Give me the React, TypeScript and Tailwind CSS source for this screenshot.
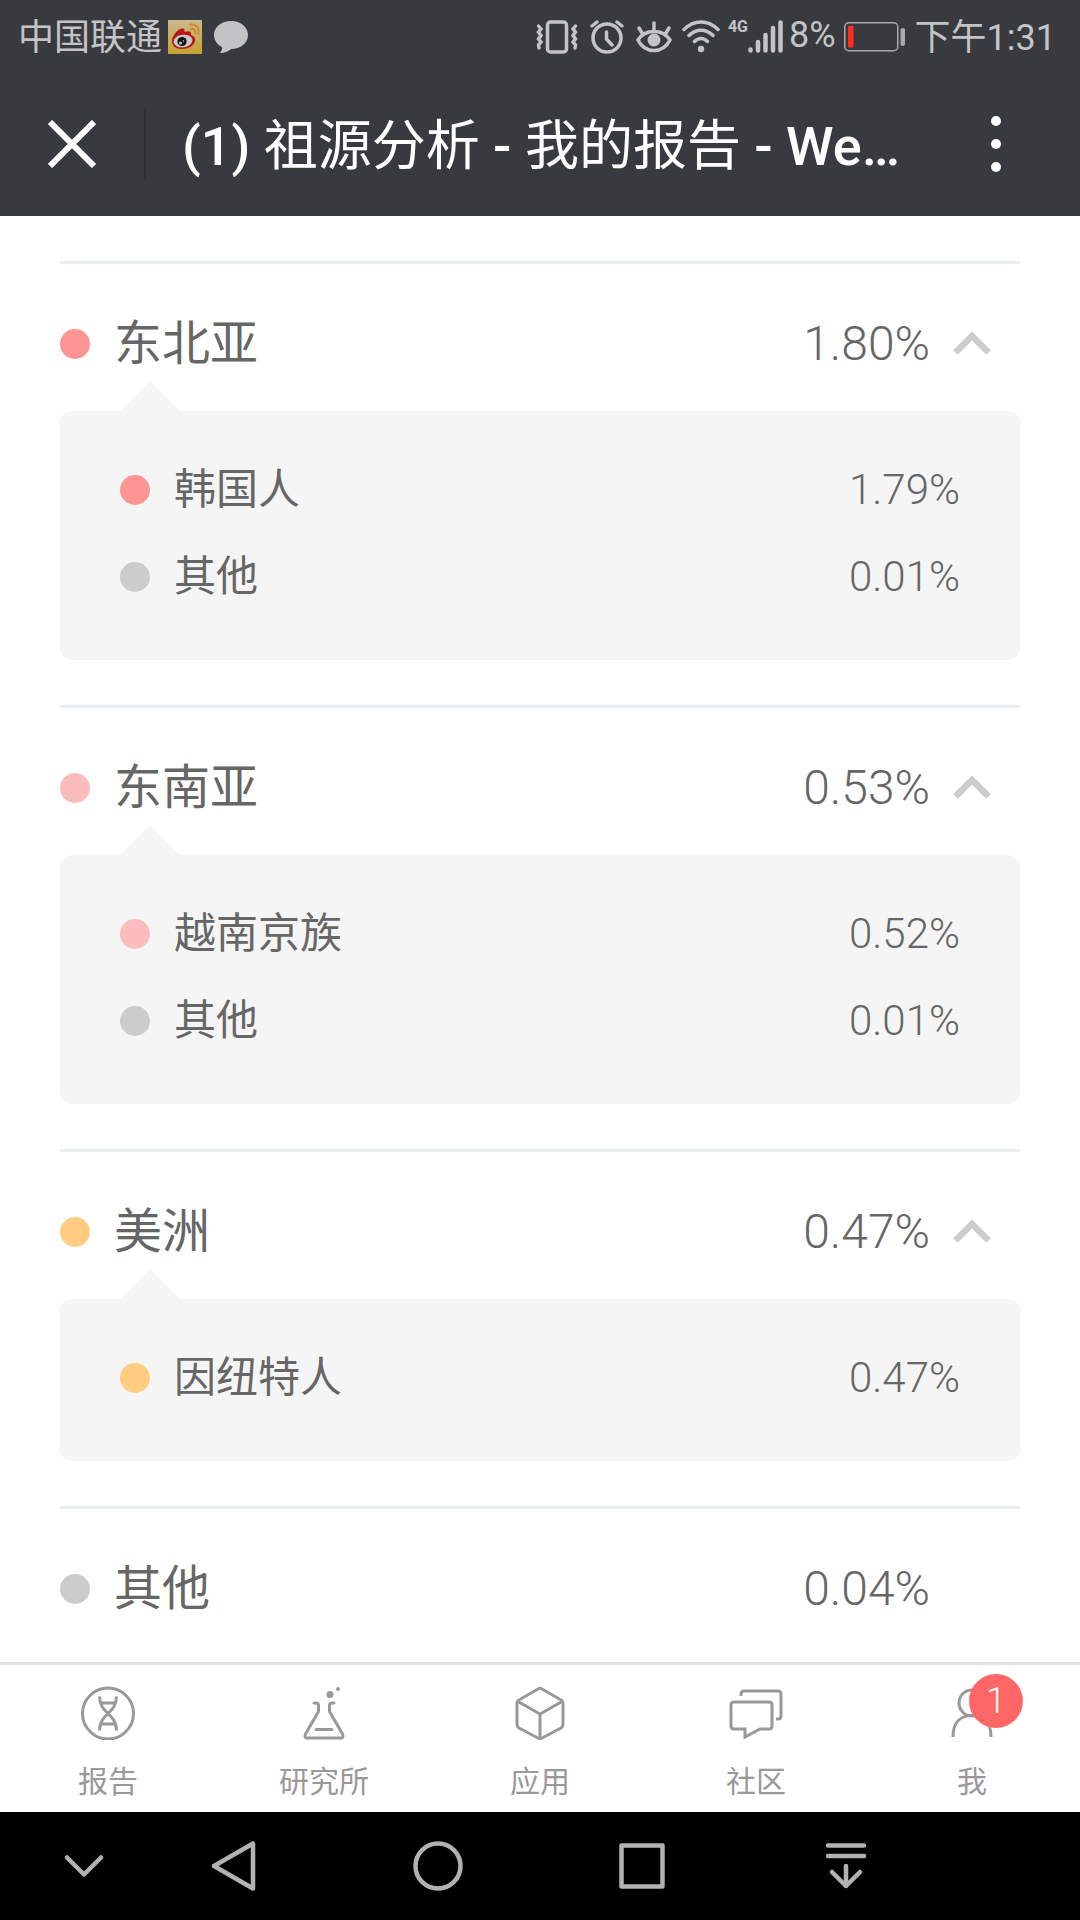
import React, { useState } from 'react';

interface Item {
    name: string;
    value: string;
    dot: string;
}

interface Region extends Item {
    children: Item[];
}

const REGIONS: Region[] = [
    {
        name: '东北亚', value: '1.80%', dot: 'bg-[#ff9494]',
        children: [
            { name: '韩国人', value: '1.79%', dot: 'bg-[#ff9494]' },
            { name: '其他', value: '0.01%', dot: 'bg-[#cccccc]' },
        ],
    },
    {
        name: '东南亚', value: '0.53%', dot: 'bg-[#fabcbc]',
        children: [
            { name: '越南京族', value: '0.52%', dot: 'bg-[#fabcbc]' },
            { name: '其他', value: '0.01%', dot: 'bg-[#cccccc]' },
        ],
    },
    {
        name: '美洲', value: '0.47%', dot: 'bg-[#ffcc80]',
        children: [
            { name: '因纽特人', value: '0.47%', dot: 'bg-[#ffcc80]' },
        ],
    },
    { name: '其他', value: '0.04%', dot: 'bg-[#cccccc]', children: [] },
];

const WeiboIcon = () => (
    <svg width="34" height="34" viewBox="0 0 34 34">
        <defs>
            <linearGradient id="weibo-bg" x1="0" y1="0" x2="0" y2="1">
                <stop offset="0" stopColor="#c9b98c" />
                <stop offset="1" stopColor="#c7a22f" />
            </linearGradient>
        </defs>
        <rect width="34" height="34" fill="url(#weibo-bg)" />
        <path d="M4 21C4 15 11 7.500 15 8.500C17 9 16.500 11 16.500 12C20 10.500 24 11 23 15C26 16 28 18 27 21C26 26 20 29 14 29C8 29 4 26 4 21Z" fill="#b8161b" />
        <ellipse cx="15" cy="21" rx="9.500" ry="6.300" fill="#c8c8c8" transform="rotate(-6 15 21)" />
        <circle cx="14" cy="21.500" r="4.600" fill="#111" />
        <circle cx="12.500" cy="23" r="1.500" fill="#c8c8c8" />
        <circle cx="15.400" cy="21" r="0.800" fill="#c8c8c8" />
        <path d="M22.500 4.600C28 3.500 32 8.500 30.300 14M23 9C26 8.300 28 10.500 27 13.500" fill="none" stroke="#d08a2a" strokeWidth="2" strokeLinecap="round" />
    </svg>
);

const BubbleIcon = () => (
    <svg width="34" height="34" viewBox="0 0 34 34" fill="#c4c4c6">
        <path d="M17 1C26.500 1 34 7 34 15C34 23 26.500 29 17 29C15.500 30.500 11 33 6.500 33C6 33 6 32.300 6.500 32C8 30.500 8.500 28.500 8 27C3 24.500 0 20 0 15C0 7 7.500 1 17 1Z" />
    </svg>
);

const VibrateIcon = () => (
    <svg width="42" height="34" viewBox="0 0 42 34" fill="none" stroke="#c4c4c6" strokeWidth="3.500" strokeLinecap="round">
        <rect x="11.500" y="2" width="19" height="30" rx="3" />
        <path d="M2.500 6L5 9L2.500 12L5 15.500L2.500 19L5 22L2.500 25L3 28M39.500 6L37 9L39.500 12L37 15.500L39.500 19L37 22L39.500 25L39 28" />
    </svg>
);

const AlarmIcon = () => (
    <svg width="34" height="34" viewBox="0 0 34 34" fill="none" stroke="#c4c4c6" strokeWidth="3.500" strokeLinecap="round">
        <circle cx="17" cy="18" r="14" />
        <path d="M16.500 12V19L22 25M2 6L7 2M32 6L27 2" />
    </svg>
);

const EyeIcon = () => (
    <svg width="36" height="34" viewBox="0 0 36 34" fill="none" stroke="#c4c4c6" strokeWidth="3.500" strokeLinecap="round">
        <path d="M2 20C9 8.500 27 8.500 34 20C27 34 9 34 2 20ZM18 10V3M6 13L3 8M30 13L33 8" />
        <circle cx="18" cy="20" r="6.500" fill="#c4c4c6" stroke="none" />
    </svg>
);

const WifiIcon = () => (
    <svg width="38" height="34" viewBox="0 0 38 34" fill="none" stroke="#c4c4c6" strokeWidth="3.500" strokeLinecap="round">
        <path d="M2 9.500C12 -0.500 26 -0.500 36 9.500M7 15.500C14 8.500 24 8.500 31 15.500M12.500 21.500C16.500 17.500 21.500 17.500 25.500 21.500" />
        <circle cx="19" cy="29" r="3.200" fill="#c4c4c6" stroke="none" />
    </svg>
);

const SignalIcon = () => (
    <svg width="35" height="34" viewBox="0 0 35 34" stroke="#c4c4c6" strokeWidth="4.500" strokeLinecap="round">
        <path d="M2.500 29.500V30.500M10 22V30.500M17.500 15V30.500M25 8V30.500M32.500 2.500V30.500" />
    </svg>
);

const BatteryIcon = () => (
    <svg width="61" height="30" viewBox="0 0 61 30">
        <rect x="0.750" y="0.750" width="53" height="28" rx="4" fill="none" stroke="#a9a9ab" strokeWidth="1.500" />
        <rect x="4" y="4" width="5.500" height="21.500" rx="1" fill="#ff2d1c" />
        <rect x="56.500" y="6" width="4.500" height="18" rx="2" fill="#a9a9ab" />
    </svg>
);

const ChevronUp = () => (
    <svg width="38" height="24" viewBox="0 0 38 24" fill="none" stroke="#cccccc" strokeWidth="6.500">
        <path d="M2.500 20.500L19 4L35.500 20.500" />
    </svg>
);

const StatusBar = () => (
    <div className="flex h-[72px] items-center justify-between pt-0.5 pr-6 pl-[18px] text-4xl/9 text-[#c4c4c6]">
        <div className="flex items-center">
            <span className="pt-0.5">中国联通</span>
            <span className="mr-3 ml-1.5"><WeiboIcon /></span>
            <BubbleIcon />
        </div>
        <div className="flex items-center">
            <VibrateIcon />
            <span className="ml-3"><AlarmIcon /></span>
            <span className="ml-3"><EyeIcon /></span>
            <span className="ml-2.5"><WifiIcon /></span>
            <span className="ml-2 self-start text-base/5 font-bold">4G</span>
            <SignalIcon />
            <span className="ml-1.5 pb-1">8%</span>
            <span className="mr-2.5 ml-2"><BatteryIcon /></span>
            <span className="pt-0.5">下午1:31</span>
        </div>
    </div>
);

const TitleBar = () => (
    <div className="flex h-36 items-center">
        <button aria-label="关闭" className="flex h-[72px] w-[146px] shrink-0 items-center justify-center border-r-2 border-[#2e2e32]">
            <svg width="48" height="48" viewBox="0 0 48 48" stroke="#ffffff" strokeWidth="6">
                <path d="M2 2L46 46M46 2L2 46" />
            </svg>
        </button>
        <h1 className="min-w-0 flex-1 truncate pt-1.5 pl-9 text-[54px]/[72px] font-medium text-white">
            (1) <span className="font-normal">祖源分析</span> - <span className="font-normal">我的报告</span> - We…
        </h1>
        <button aria-label="更多" className="flex h-[72px] w-[168px] shrink-0 items-center justify-center">
            <svg width="10" height="58" viewBox="0 0 10 58" fill="#ffffff">
                <circle cx="5" cy="6" r="5" />
                <circle cx="5" cy="29" r="5" />
                <circle cx="5" cy="52" r="5" />
            </svg>
        </button>
    </div>
);

const RegionSection = ({ region }: { region: Region }) => {
    const [open, setOpen] = useState(true);
    const expandable = region.children.length > 0;

    return (
        <section className="mx-[60px] border-t-3 border-[#ebeef1] pb-[45px]">
            <button
                onClick={() => setOpen(!open)}
                aria-expanded={expandable ? open : undefined}
                className="flex h-[147px] w-full items-center pt-3 pr-[29px] text-left text-5xl/[72px] text-[#666666]"
            >
                <span className={`mr-6 size-[30px] rounded-full ${region.dot}`}></span>
                <span className="flex-1">{region.name}</span>
                <span className="font-light">{region.value}</span>
                <span className="ml-[23px] flex w-[38px]">{expandable && <ChevronUp />}</span>
            </button>

            {expandable && open && (
                <div className="relative rounded-xl bg-[#f5f5f5] px-[60px] pt-[35px] pb-10">
                    {/* pointer towards the region name */}
                    <svg className="absolute bottom-full left-[60px]" width="60" height="30" viewBox="0 0 60 30" fill="#f5f5f5">
                        <path d="M0 30L30 0L60 30Z" />
                    </svg>
                    <ul>
                        {region.children.map((item) => (
                            <li key={item.name} className="flex h-[87px] items-center text-[42px]/[60px] text-[#666666]">
                                <span className={`mr-6 size-[30px] rounded-full ${item.dot}`}></span>
                                <span className="flex-1">{item.name}</span>
                                <span className="font-light">{item.value}</span>
                            </li>
                        ))}
                    </ul>
                </div>
            )}
        </section>
    );
};

const TabIcon = ({ children }: { children: React.ReactNode }) => (
    <svg width="54" height="54" viewBox="0 0 54 54" fill="none" stroke="#999999" strokeWidth="3">
        {children}
    </svg>
);

const TABS = [
    {
        label: '报告',
        badge: 0,
        icon: (
            <TabIcon>
                <circle cx="27" cy="27.500" r="25.500" />
                <path d="M18.500 10.500C18.500 28 35.500 27 35.500 44.500M35.500 10.500C35.500 28 18.500 27 18.500 44.500M20 17H34M20 38H34" />
            </TabIcon>
        ),
    },
    {
        label: '研究所',
        badge: 0,
        icon: (
            <TabIcon>
                <path d="M17 17H19Q21.500 17 21.500 19.500V25.500L8.500 48Q7 52 10 52H44Q47 52 45.500 48L32.500 25.500V19.500Q32.500 17 35 17H37M19 43.500H35" strokeLinecap="round" />
                <circle cx="33" cy="8.500" r="3.500" fill="#999999" stroke="none" />
                <circle cx="41" cy="3" r="2" fill="#999999" stroke="none" />
            </TabIcon>
        ),
    },
    {
        label: '应用',
        badge: 0,
        icon: (
            <TabIcon>
                <path d="M25 3Q27 1.500 29 3L48 14Q50 15 50 17.500V38.500Q50 40.500 48 42L29 52Q27 53 25 52L6 42Q4 40.500 4 38.500V17.500Q4 15 6 14ZM5 15.500L27 28L49 15.500M27 28V52" />
            </TabIcon>
        ),
    },
    {
        label: '社区',
        badge: 0,
        icon: (
            <TabIcon>
                <path d="M5 16H40Q43 16 43 19V40Q43 43 40 43H31L16 51V43H5Q2 43 2 40V19Q2 16 5 16Z" />
                <path d="M12 10V8Q12 5 15 5H49Q52 5 52 8V30Q52 33 49 33H47" />
            </TabIcon>
        ),
    },
    {
        label: '我',
        badge: 1,
        icon: (
            <TabIcon>
                <circle cx="27" cy="17" r="13" />
                <path d="M8 51C8 36 16 29.500 27 29.500S46 36 46 51" />
            </TabIcon>
        ),
    },
];

const TabBar = () => (
    <nav className="grid grid-cols-5 border-t-3 border-[#dfe3e6] bg-white">
        {TABS.map((tab) => (
            <a key={tab.label} href="#" className="flex h-[147px] flex-col items-center pt-[21px] text-3xl/9 text-[#999999]">
                <span className="relative mb-6">
                    {tab.icon}
                    {tab.badge > 0 && (
                        <span className="absolute -top-3 left-6 flex size-[54px] items-center justify-center rounded-full bg-[#ff6666] text-4xl/9 font-light text-white">
                            {tab.badge}
                        </span>
                    )}
                </span>
                {tab.label}
            </a>
        ))}
    </nav>
);

const NavIcon = ({ label, d }: { label: string, d: string }) => (
    <button aria-label={label} className="flex items-center justify-center">
        <svg width="50" height="50" viewBox="0 0 50 50" fill="none" stroke="#b2b2b2" strokeWidth="4.500" strokeLinecap="round" strokeLinejoin="round">
            <path d={d} />
        </svg>
    </button>
);

const SystemNav = () => (
    <div className="grid h-27 grid-cols-[96fr_204fr_204fr_204fr_204fr_132fr] bg-black pl-9">
        <NavIcon label="收起" d="M8 16.500L25 33.500L42 16.500" />
        <NavIcon label="返回" d="M44 2.500V47.500L5 25Z" />
        <NavIcon label="主页" d="M2.500 25A22.500 22.500 0 1 0 47.500 25A22.500 22.500 0 1 0 2.500 25Z" />
        <NavIcon label="最近任务" d="M4.500 4.500H45.500V45.500H4.500Z" />
        <NavIcon label="通知" d="M7 4.500H43M7 15H43M25 25V45M11 31L25 45L39 31" />
    </div>
);

export default function App() {
    return (
        <div className="flex h-screen flex-col overflow-hidden bg-white font-[Roboto,'Noto_Sans_CJK_SC',sans-serif]">
            <header className="shrink-0 bg-[#393a3f]">
                <StatusBar />
                <TitleBar />
            </header>

            <main className="min-h-0 flex-1 overflow-hidden pt-[45px]">
                {REGIONS.map((region, i) => (
                    <RegionSection key={i} region={region} />
                ))}
            </main>

            <footer className="shrink-0">
                <TabBar />
                <SystemNav />
            </footer>
        </div>
    );
}
